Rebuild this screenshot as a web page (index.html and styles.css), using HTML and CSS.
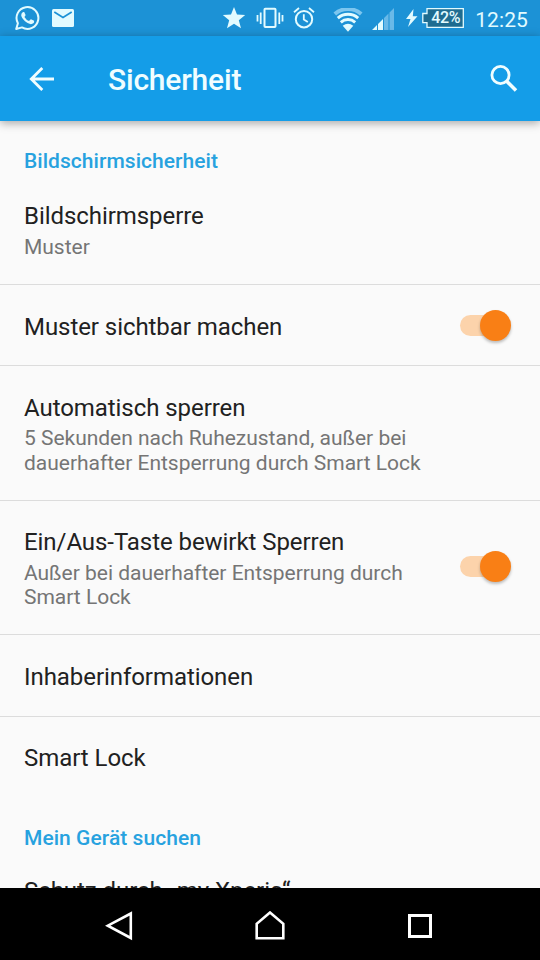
FILE: index.html
```html
<!DOCTYPE html>
<html lang="de">
<head>
    <meta charset="UTF-8">
    <meta name="viewport" content="width=device-width, initial-scale=1.0">
    <title>Sicherheit</title>
    <link rel="stylesheet" href="styles.css">
</head>
<body>
    <div class="screen">
        <!-- Statusleiste -->
        <div class="status-bar">
            <svg class="icon-whatsapp" width="26" height="26" viewBox="0 0 26 26">
                <path d="M2.2 24 L3.9 18.2 A10.9 10.9 0 1 1 8 22.4 Z" fill="none" stroke="currentColor" stroke-width="2" stroke-linejoin="round"/>
                <path d="M8.7 7.2 q.8-.5 1.5-.1 l1.4 3 q0 .7-1.2 1.9 q1.8 3 4.6 4.1 l1.5-1.7 q.5-.3 1 0 l2.6 1.4 q.4 2.6-2.5 3.3 q-2.6.5-6.6-2.9 q-3.6-3.4-3.8-5.9 q0-2.1 1.5-3.1z" fill="currentColor"/>
            </svg>
            <svg class="icon-mail" width="22" height="18" viewBox="0 0 22 18">
                <rect width="22" height="18" rx="1.5" fill="currentColor"/>
                <path d="M2.3 3 L11 8.5 L19.7 3" fill="none" stroke="#1c92d6" stroke-width="1.7"/>
            </svg>
            <div class="status-right">
                <svg class="icon-star" width="24" height="22" viewBox="0 0 24 22">
                    <path d="M12 0 L15 7.6 L23.2 8 L16.8 13.2 L19 21.2 L12 16.7 L5 21.2 L7.2 13.2 L.8 8 L9 7.6 Z" fill="currentColor"/>
                </svg>
                <svg class="icon-vibrate" width="28" height="22" viewBox="0 0 28 22">
                    <rect x="8.5" y="1.8" width="11" height="18.2" rx=".8" fill="none" stroke="currentColor" stroke-width="2"/>
                    <path d="M4.7 5.5 V17 M1.5 8 V14.5 M23.3 5.5 V17 M26.5 8 V14.5" stroke="currentColor" stroke-width="1.8"/>
                </svg>
                <svg class="icon-alarm" width="22" height="22" viewBox="0 0 22 22">
                    <circle cx="11" cy="12.2" r="8.2" fill="none" stroke="currentColor" stroke-width="2"/>
                    <path d="M1 5.2 L6 1 M21 5.2 L16 1 M10.8 7.2 V12.5 L14.8 15" fill="none" stroke="currentColor" stroke-width="1.8"/>
                </svg>
                <svg class="icon-wifi" width="30" height="24" viewBox="0 0 30 24">
                    <path d="M1.8 6 A20 20 0 0 1 28.2 6" fill="none" stroke="#7cc6ef" stroke-width="4"/>
                    <path d="M4.8 10.2 A15.5 15.5 0 0 1 25.2 10.2" fill="none" stroke="currentColor" stroke-width="3"/>
                    <path d="M7.8 14.3 A11 11 0 0 1 22.2 14.3" fill="none" stroke="currentColor" stroke-width="3"/>
                    <path d="M15 23.7 L9.7 17.7 Q15 13.8 20.3 17.7 Z" fill="currentColor"/>
                </svg>
                <svg class="icon-signal" width="23" height="23" viewBox="0 0 23 23">
                    <path d="M0 22 L5 17 V22 Z M6 16 L11 11 V22 H6 Z" fill="currentColor"/>
                    <path d="M12 10 L16.5 5.5 V22 H12 Z M17.5 4.5 L22 0 V22 H17.5 Z" fill="#69b9e8"/>
                </svg>
                <svg class="icon-bolt" width="12" height="18" viewBox="0 0 12 18">
                    <path d="M7.5 0 L0 10 H4.5 L2 18 L11.5 7.2 H6.8 Z" fill="currentColor"/>
                </svg>
                <div class="battery">
                    <svg class="battery-shape" width="42" height="20" viewBox="0 0 42 20">
                        <path d="M5 .7 H41.3 V19.3 H5 V14.7 H.8 V5.5 H5 Z" fill="#1e6c90" stroke="currentColor" stroke-width="1.3"/>
                    </svg>
                    <span class="battery-level">42%</span>
                </div>
                <span class="clock">12:25</span>
            </div>
        </div>

        <header class="toolbar">
            <svg class="icon-back" width="26" height="26" viewBox="0 0 26 26">
                <path d="M25 13 H2.5 M13.3 2 L2.3 13 L13.3 24" fill="none" stroke="currentColor" stroke-width="2.8"/>
            </svg>
            <h1>Sicherheit</h1>
            <svg class="icon-search" width="28" height="28" viewBox="0 0 28 28">
                <circle cx="10.5" cy="10" r="8.6" fill="none" stroke="currentColor" stroke-width="2.8"/>
                <path d="M16.7 16.2 L26 25.5" stroke="currentColor" stroke-width="3.6"/>
            </svg>
        </header>

        <!-- Einstellungen -->
        <main class="settings">
            <h2 class="category">Bildschirmsicherheit</h2>
            <div class="item item-first">
                <div class="item-text">
                    <p class="title">Bildschirmsperre</p>
                    <p class="summary">Muster</p>
                </div>
            </div>
            <div class="item item-single">
                <div class="item-text">
                    <p class="title">Muster sichtbar machen</p>
                </div>
                <div class="switch"><span class="thumb"></span></div>
            </div>
            <div class="item">
                <div class="item-text">
                    <p class="title">Automatisch sperren</p>
                    <p class="summary">5 Sekunden nach Ruhezustand, außer bei<br>dauerhafter Entsperrung durch Smart Lock</p>
                </div>
            </div>
            <div class="item">
                <div class="item-text">
                    <p class="title">Ein/Aus-Taste bewirkt Sperren</p>
                    <p class="summary">Außer bei dauerhafter Entsperrung durch<br>Smart Lock</p>
                </div>
                <div class="switch"><span class="thumb"></span></div>
            </div>
            <div class="item item-single">
                <div class="item-text">
                    <p class="title">Inhaberinformationen</p>
                </div>
            </div>
            <div class="item item-single item-last">
                <div class="item-text">
                    <p class="title">Smart Lock</p>
                </div>
            </div>
            <h2 class="category">Mein Gerät suchen</h2>
            <div class="item item-first item-cut">
                <div class="item-text">
                    <p class="title">Schutz durch „my Xperia“</p>
                </div>
            </div>
        </main>

        <nav class="nav-bar">
            <svg width="30" height="30" viewBox="0 0 30 30">
                <path d="M25.8 2.5 V27 L2.8 14.7 Z" fill="none" stroke="currentColor" stroke-width="2.6"/>
            </svg>
            <svg width="30" height="30" viewBox="0 0 30 30">
                <path d="M1.7 27.3 V12.8 L15 1.5 L28.3 12.8 V27.3 Z" fill="none" stroke="currentColor" stroke-width="2.6"/>
            </svg>
            <svg width="30" height="30" viewBox="0 0 30 30">
                <rect x="4.5" y="4.5" width="21" height="21" fill="none" stroke="currentColor" stroke-width="3"/>
            </svg>
        </nav>
    </div>
</body>
</html>
```
FILE: styles.css
```css
* {
    box-sizing: border-box;
    margin: 0;
    padding: 0;
}

body {
    font-family: Roboto, "Noto Sans", sans-serif;
    background: #fafafa;
    color: #212121;
}

svg {
    display: block;
    flex-shrink: 0;
}

.screen {
    display: flex;
    flex-direction: column;
    width: 540px;
    height: 960px;
    overflow: hidden;
}

.status-bar {
    display: flex;
    align-items: center;
    height: 36px;
    flex-shrink: 0;
    padding: 0 12px 0 14px;
    background: #1c92d6;
    color: #e2fbff;
}

.icon-mail {
    margin-left: 12px;
}

.status-right {
    display: flex;
    align-items: center;
    margin-left: auto;
}

.icon-vibrate {
    margin-left: 10px;
}

.icon-alarm {
    margin-left: 9px;
}

.icon-wifi {
    margin: 3px 0 0 18px;
}

.icon-signal {
    margin: 2px 0 0 9px;
}

.icon-bolt {
    margin-left: 11px;
}

.battery {
    position: relative;
    margin-left: 4px;
}

.battery-level {
    position: absolute;
    inset: 0 0 0 5px;
    font-size: 16px;
    font-weight: 500;
    line-height: 20px;
    letter-spacing: -0.4px;
    text-align: center;
}

.clock {
    margin: 3px 0 0 11px;
    font-size: 21px;
    line-height: 24px;
    letter-spacing: 0.1px;
}

.toolbar {
    position: relative;
    display: flex;
    align-items: center;
    height: 85px;
    flex-shrink: 0;
    padding: 1px 22px 0 29px;
    background: #149de8;
    color: #f0fdff;
    box-shadow: 0 2px 9px rgba(0, 0, 0, 0.35);
}

.toolbar h1 {
    margin: 2px 0 0 53px;
    font-size: 30px;
    font-weight: 500;
    line-height: 36px;
    letter-spacing: -0.2px;
}

.icon-search {
    margin-left: auto;
}

.settings {
    flex: 1;
    min-height: 0;
    overflow: hidden;
    padding-top: 24px;
}

.category {
    padding: 0 24px;
    font-size: 21px;
    font-weight: 500;
    line-height: 32px;
    letter-spacing: 0.05px;
    color: #27a2df;
}

.item {
    display: flex;
    align-items: center;
    justify-content: space-between;
    padding: 26.4px 29px 24.6px 24px;
    border-bottom: 1px solid #dcdcdc;
}

.item-first {
    padding-top: 24px;
    padding-bottom: 24.5px;
}

/* rows without a summary line */
.item-single {
    height: 81.2px;
    padding-top: 3px;
    padding-bottom: 0;
}

.item .switch {
    margin-top: -3px;
}

.item-last {
    border-bottom: none;
    height: 105px;
    padding-bottom: 26px;
}

/* row that scrolls under the navigation bar */
.item-cut {
    padding-top: 22px;
}

.title {
    font-size: 24px;
    line-height: 30px;
    letter-spacing: -0.06px;
}

.summary {
    margin-top: 3.6px;
    font-size: 21px;
    line-height: 24.5px;
    letter-spacing: -0.02px;
    color: #757575;
    white-space: nowrap;
}

.item-first .summary {
    margin-top: 4px;
}

.switch {
    display: flex;
    align-items: center;
    justify-content: flex-end;
    width: 51px;
    height: 21px;
    flex-shrink: 0;
    border-radius: 11px;
    background: #fcd3ab;
}

.thumb {
    width: 31px;
    height: 31px;
    flex-shrink: 0;
    border-radius: 50%;
    background: #f97f15;
    box-shadow: 0 2px 3px rgba(0, 0, 0, 0.25);
}

.nav-bar {
    display: flex;
    align-items: center;
    justify-content: center;
    gap: 120px;
    height: 72px;
    flex-shrink: 0;
    padding-top: 4px;
    background: #000;
    color: #fff;
}
```
